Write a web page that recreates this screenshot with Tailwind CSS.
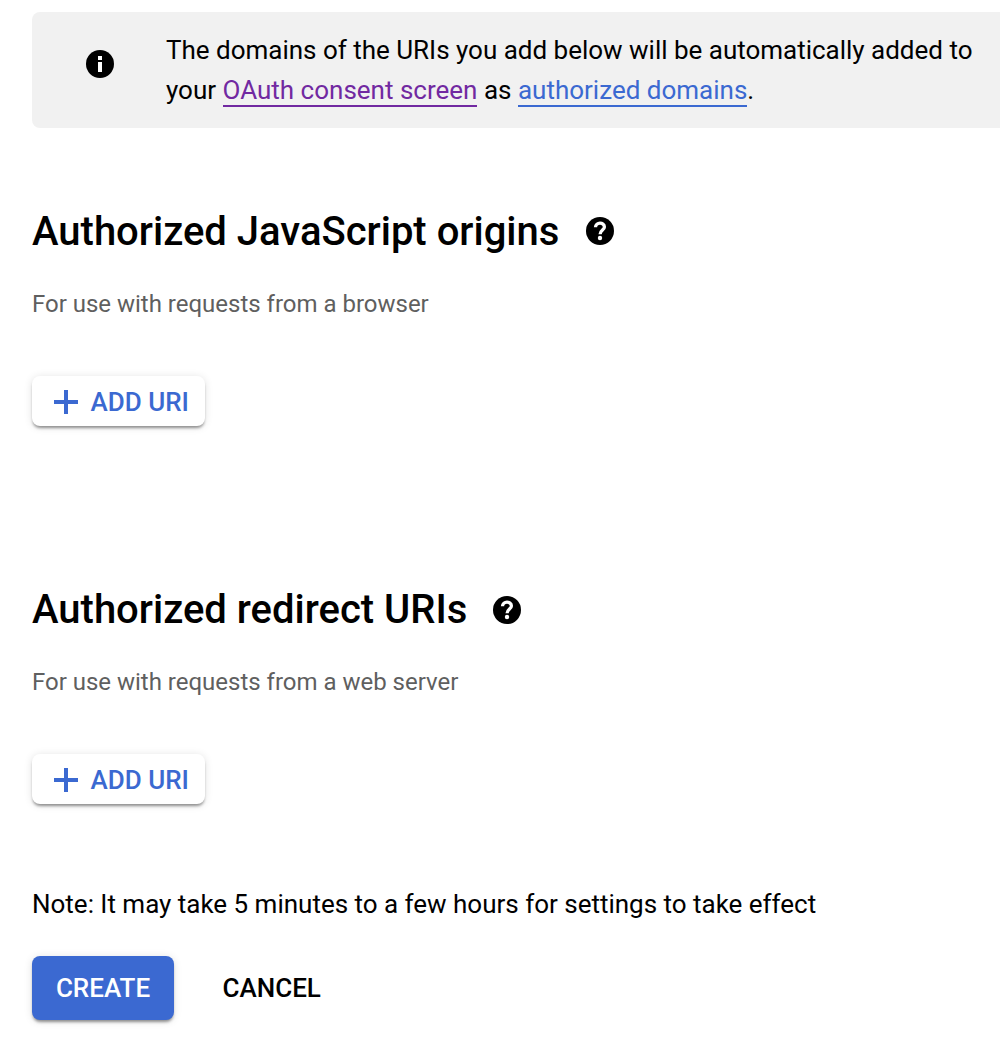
<!DOCTYPE html>
<html lang="en">
<head>
<meta charset="utf-8">
<title>Create OAuth client</title>
<script src="https://cdn.jsdelivr.net/npm/@tailwindcss/browser@4"></script>
</head>
<body class="bg-white text-black font-['Roboto',sans-serif]">
<svg class="hidden">
  <symbol id="help" viewBox="0 0 28 28"><circle cx="14" cy="14" r="14"/><path d="M9.500 10.300C9.500 4.800 18.400 4.900 18.400 9.900C18.400 13 14.100 13.100 14.100 17.300" fill="none" stroke="#fff" stroke-width="3.300"/><circle cx="14" cy="21" r="2.200" fill="#fff"/></symbol>
</svg>
<main class="flex flex-col pb-[18px] pl-8">
  <aside class="mt-3 flex h-[116px] rounded-l-lg bg-[#f1f1f1] pl-[54px] pt-[18px]">
    <svg class="mt-5 size-7 shrink-0" viewBox="0 0 28 28"><circle cx="14" cy="14" r="14"/><path d="M12 6h4v4h-4zM12 12h4v10h-4z" fill="#fff"/></svg>
    <p class="ml-[52px] whitespace-nowrap text-[26px] leading-10"><span class="tracking-[-0.01px]">The domains of the URIs you add below will be automatically added to</span><br>your <a class="border-b-2 border-[#7129a1] text-[#7129a1]">OAuth consent screen</a> as <a class="border-b-2 border-[#3b69d1] text-[#3b69d1]">authorized domains</a>.</p>
  </aside>
  <section class="mt-[79px] flex h-[378px] flex-col items-start">
    <h2 class="flex h-12 items-center text-[40px] font-medium whitespace-nowrap"><span class="pt-0.5">Authorized JavaScript origins</span><svg class="ml-[27px] size-7"><use href="#help"/></svg></h2>
    <p class="mt-[29px] h-10 text-2xl leading-10 tracking-[-0.01px] text-[#5f5f5f]">For use with requests from a browser</p>
    <button class="mt-[52px] flex h-[50px] w-[173px] items-center rounded-lg bg-white pt-0.5 pl-[22px] text-[26px] font-medium text-[#3b69d1] shadow-[0_3px_3px_-1px_rgba(0,0,0,.4),0_1px_8px_rgba(0,0,0,.12)]"><svg class="mr-[12.500px] size-6 shrink-0" viewBox="0 0 24 24" fill="currentColor"><path d="M10 0h4v10h10v4H14v10h-4V14H0v-4h10z"/></svg><span class="whitespace-nowrap">ADD URI</span></button>
  </section>
  <section class="flex h-[299px] flex-col items-start">
    <h2 class="flex h-12 items-center text-[40px] font-medium whitespace-nowrap"><span class="pt-0.5">Authorized redirect URIs</span><svg class="mt-0.5 ml-[26px] size-7"><use href="#help"/></svg></h2>
    <p class="mt-[29px] h-10 text-2xl leading-10 tracking-[-0.01px] text-[#5f5f5f]">For use with requests from a web server</p>
    <button class="mt-[52px] flex h-[50px] w-[173px] items-center rounded-lg bg-white pt-0.5 pl-[22px] text-[26px] font-medium text-[#3b69d1] shadow-[0_3px_3px_-1px_rgba(0,0,0,.4),0_1px_8px_rgba(0,0,0,.12)]"><svg class="mr-[12.500px] size-6 shrink-0" viewBox="0 0 24 24" fill="currentColor"><path d="M10 0h4v10h10v4H14v10h-4V14H0v-4h10z"/></svg><span class="whitespace-nowrap">ADD URI</span></button>
  </section>
  <p class="h-10 text-[26px] leading-10 tracking-[-0.01px]">Note: It may take 5 minutes to a few hours for settings to take effect</p>
  <div class="mt-8 flex h-16 items-center text-[26px] font-medium">
    <button class="h-16 w-[142px] rounded-lg bg-[#3b69d1] text-white shadow-[0_3px_3px_-1px_rgba(0,0,0,.4),0_1px_8px_rgba(0,0,0,.12)]">CREATE</button>
    <button class="ml-[48.500px]">CANCEL</button>
  </div>
</main>
</body>
</html>
